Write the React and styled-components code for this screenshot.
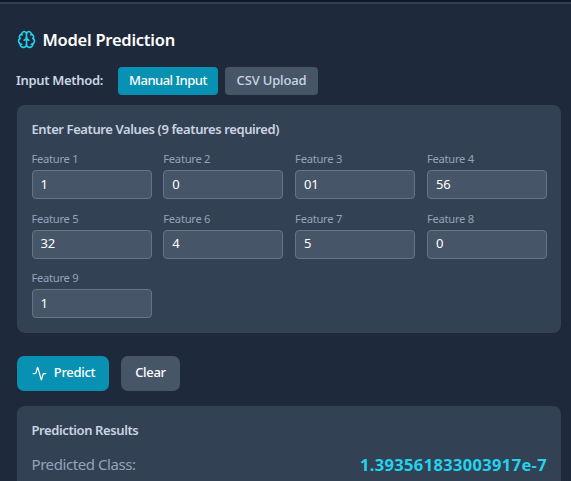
import React, { useState } from "react";
import styled, { createGlobalStyle } from "styled-components";
import { Brain, Activity } from "lucide-react";

const GlobalStyle = createGlobalStyle`
  *, *::before, *::after { box-sizing: border-box; }
  body {
    margin: 0;
    overflow: hidden;
    background: #0f172a;
    font-family: "Segoe UI", "Noto Sans", sans-serif;
  }
`;

const Page = styled.div`
  height: 481px;
  padding-top: 2px;
  overflow: hidden;
`;

const Card = styled.main`
  height: 560px;
  padding: 25px 10px 0 17px;
  background: #1e293b;
  border-top: 2px solid #334155;
`;

const Header = styled.header`
  display: flex;
  align-items: center;
  gap: 7px;
  height: 22px;
  margin-left: -0.5px;
  color: #22d3ee;

  svg {
    margin-bottom: 2px;
  }
`;

const Title = styled.h1`
  margin: 0;
  font-size: 16.5px;
  line-height: 22px;
  font-weight: 600;
  letter-spacing: -0.25px;
  color: #fff;
  white-space: nowrap;
`;

const MethodRow = styled.div`
  display: flex;
  align-items: center;
  height: 28px;
  margin: 16px 0 10px;
`;

const MethodLabel = styled.span`
  width: 101px;
  margin-left: -1px;
  margin-right: 1px;
  padding-bottom: 2px;
  font-size: 13px;
  font-weight: 600;
  letter-spacing: -0.32px;
  color: #cbd5e1;
  white-space: nowrap;
`;

const MethodButton = styled.button`
  width: ${(p) => p.$width}px;
  height: 28px;
  margin-right: 7px;
  padding: 0 0 2px;
  border: 0;
  border-radius: 4px;
  font: 500 13px "Segoe UI", "Noto Sans", sans-serif;
  letter-spacing: ${(p) => p.$tracking}px;
  white-space: nowrap;
  color: ${(p) => (p.$active ? "#fff" : "#cbd5e1")};
  background: ${(p) => (p.$active ? "#0891b2" : "#475569")};
`;

const Panel = styled.section`
  height: ${(p) => p.$height}px;
  padding: 15px 14px 0 14.5px;
  background: #334155;
  border-radius: 8px;
`;

const PanelTitle = styled.h2`
  margin: 0;
  font-size: 13px;
  line-height: 19px;
  font-weight: 600;
  letter-spacing: -0.4px;
  color: #cbd5e1;
  white-space: nowrap;
`;

const FeatureGrid = styled.div`
  display: grid;
  grid-template-columns: repeat(4, 120px);
  grid-auto-rows: 59.7px;
  column-gap: 11.8px;
  margin-top: 12px;
`;

const Field = styled.label`
  display: block;
  font-size: 11.2px;
  line-height: 15px;
  letter-spacing: -0.27px;
  color: #94a3b8;
`;

const FieldInput = styled.input`
  display: block;
  width: 120px;
  height: 29px;
  margin-top: 4px;
  padding: 0 8px 2px;
  border: 1px solid #64748b;
  border-radius: 4px;
  outline: 0;
  background: #475569;
  color: #fff;
  font: 400 13px "Segoe UI", "Noto Sans", sans-serif;
  letter-spacing: -0.2px;
`;

const Actions = styled.div`
  display: flex;
  gap: 12px;
  margin: 23px 0 15px;
`;

const ActionButton = styled.button`
  display: flex;
  align-items: center;
  justify-content: center;
  gap: 7px;
  width: ${(p) => p.$width}px;
  height: 35px;
  padding: 0 0 3px;
  border: 0;
  border-radius: 7px;
  font: 500 13px "Segoe UI", "Noto Sans", sans-serif;
  letter-spacing: -0.3px;
  color: #fff;
  background: ${(p) => (p.$primary ? "#0891b2" : "#475569")};

  svg {
    margin: 2px 0 0 1px;
  }
`;

const ResultRow = styled.div`
  display: flex;
  justify-content: space-between;
  align-items: center;
  height: 24px;
  margin-top: 12px;
`;

const ResultLabel = styled.span`
  font-size: 15px;
  letter-spacing: -0.43px;
  color: #94a3b8;
`;

const ResultValue = styled.span`
  font-size: 16.5px;
  font-weight: 700;
  letter-spacing: 0.34px;
  color: #22d3ee;
`;

const initialValues = ["1", "0", "01", "56", "32", "4", "5", "0", "1"];

export default function App() {
  const [method, setMethod] = useState("manual");
  const [values, setValues] = useState(initialValues);
  const update = (index, value) =>
    setValues(values.map((v, i) => (i === index ? value : v)));

  return (
    <Page>
      <GlobalStyle />
      <Card>
        <Header>
          <Brain size={19} />
          <Title>Model Prediction</Title>
        </Header>
        <MethodRow>
          <MethodLabel>Input Method:</MethodLabel>
          <MethodButton
            $width={100}
            $tracking={-0.5}
            $active={method === "manual"}
            onClick={() => setMethod("manual")}
          >
            Manual Input
          </MethodButton>
          <MethodButton
            $width={93}
            $tracking={-0.15}
            $active={method === "csv"}
            onClick={() => setMethod("csv")}
          >
            CSV Upload
          </MethodButton>
        </MethodRow>
        <Panel $height={228}>
          <PanelTitle>Enter Feature Values (9 features required)</PanelTitle>
          <FeatureGrid>
            {values.map((value, i) => (
              <Field key={i}>
                Feature {i + 1}
                <FieldInput value={value} onChange={(e) => update(i, e.target.value)} />
              </Field>
            ))}
          </FeatureGrid>
        </Panel>
        <Actions>
          <ActionButton $primary $width={92}>
            <Activity size={15} />
            Predict
          </ActionButton>
          <ActionButton $width={59} onClick={() => setValues(values.map(() => ""))}>
            Clear
          </ActionButton>
        </Actions>
        <Panel $height={140}>
          <PanelTitle>Prediction Results</PanelTitle>
          <ResultRow>
            <ResultLabel>Predicted Class:</ResultLabel>
            <ResultValue>1.393561833003917e-7</ResultValue>
          </ResultRow>
        </Panel>
      </Card>
    </Page>
  );
}
